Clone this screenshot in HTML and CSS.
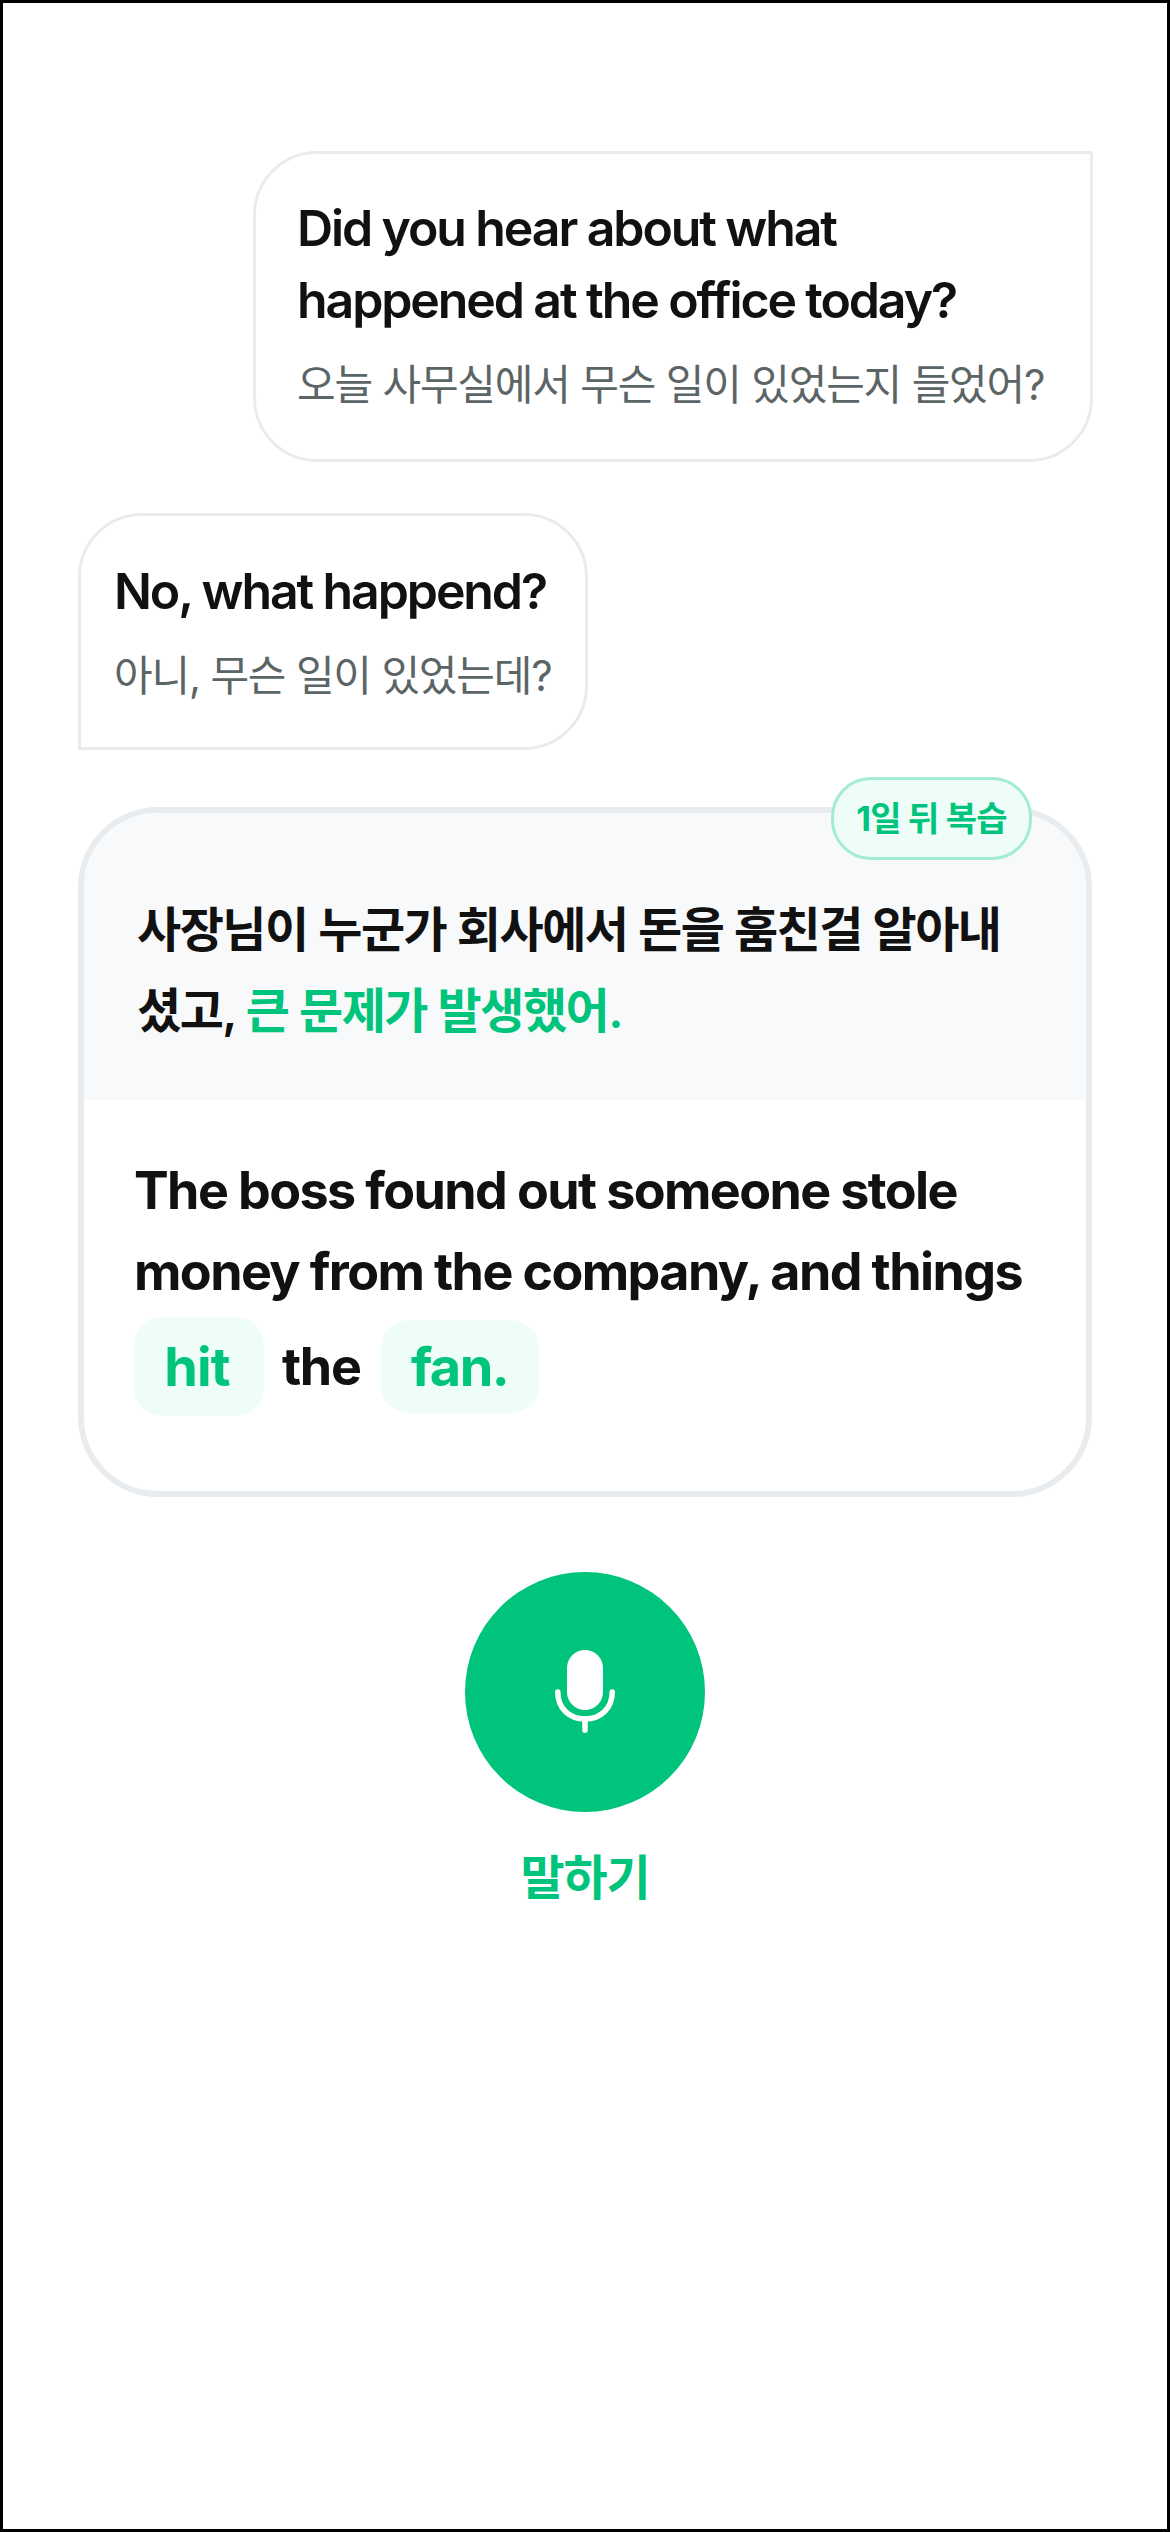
FILE: index.html
```html
<!DOCTYPE html>
<html lang="ko">
<head>
<meta charset="utf-8">
<title>말하기</title>
<link rel="stylesheet" href="styles.css">
</head>
<body>
<main class="page">
  <section class="bubble bubble-me">
    <p class="en">Did you hear about what<br>happened at the office today?</p>
    <p class="ko">오늘 사무실에서 무슨 일이 있었는지 들었어?</p>
  </section>
  <section class="bubble bubble-other">
    <p class="en">No, what happend?</p>
    <p class="ko">아니, 무슨 일이 있었는데?</p>
  </section>
  <section class="card">
    <span class="badge">1일 뒤 복습</span>
    <div class="card-top">
      <p class="card-ko">사장님이 누군가 회사에서 돈을 훔친걸 알아내<br>셨고, <span class="green">큰 문제가 발생했어.</span></p>
    </div>
    <div class="card-bottom">
      <p class="card-en">The boss found out someone stole<br>money from the company, and things</p>
      <div class="chips">
        <span class="chip chip-hit">hit</span>
        <span class="plain">the</span>
        <span class="chip chip-fan">fan.</span>
      </div>
    </div>
  </section>
  <section class="speak">
    <button class="mic" type="button" aria-label="말하기">
      <svg class="mic-icon" viewBox="0 0 64 88" width="64" height="88">
        <rect x="14" y="2" width="36" height="60" rx="18" fill="#fff"/>
        <path d="M4.75 44 C4.75 60 16 71 32 71 C48 71 59.25 60 59.25 44" fill="none" stroke="#fff" stroke-width="5.5" stroke-linecap="round"/>
        <path d="M32 71 V82.25" fill="none" stroke="#fff" stroke-width="5.5" stroke-linecap="round"/>
      </svg>
    </button>
    <span class="speak-label">말하기</span>
  </section>
</main>
</body>
</html>
```

FILE: styles.css
```css
* {
  box-sizing: border-box;
}

html,
body {
  margin: 0;
  padding: 0;
  background: #fff;
}

p {
  margin: 0;
}

.page {
  width: 1170px;
  height: 2532px;
  border: 3px solid #000;
  padding: 148px 75px 0;
  display: flex;
  flex-direction: column;
  font-family: Inter, "Noto Sans CJK KR", sans-serif;
  color: #111;
}

.bubble {
  border: 3px solid #e8ecef;
  background: #fff;
}

.bubble-me {
  align-self: flex-end;
  width: 840px;
  height: 311px;
  margin-right: -1px;
  padding: 38px 0 0 41px;
  border-radius: 64px 0 64px 64px;
}

.bubble-other {
  align-self: flex-start;
  width: 510px;
  height: 237px;
  margin-top: 51px;
  padding: 39px 0 0 33px;
  border-radius: 64px 64px 64px 0;
}

.en {
  font-size: 50px;
  font-weight: 600;
  line-height: 72px;
  letter-spacing: -2.1px;
  white-space: nowrap;
}

.ko {
  margin-top: 17px;
  font-size: 42px;
  font-weight: 400;
  line-height: 64px;
  letter-spacing: -1.2px;
  color: #5c6566;
  white-space: nowrap;
}

.card {
  position: relative;
  width: 1014px;
  height: 690px;
  margin-top: 57px;
  border: 6px solid #e8ecef;
  border-radius: 80px;
  overflow: visible;
  display: flex;
  flex-direction: column;
}

.badge {
  position: absolute;
  top: -36px;
  right: 54px;
  width: 201px;
  height: 83px;
  padding-bottom: 4px;
  border: 3px solid #a4ecd0;
  border-radius: 40px;
  background: #eefdf8;
  color: #00c47c;
  font-size: 34px;
  font-weight: 700;
  letter-spacing: -0.8px;
  display: flex;
  align-items: center;
  justify-content: center;
  white-space: nowrap;
}

.card-top {
  height: 287px;
  padding: 76px 0 0 53px;
  background: #f8f9fb;
  border-radius: 74px 74px 0 0;
}

.card-ko {
  font-size: 48px;
  font-weight: 600;
  line-height: 81px;
  letter-spacing: -1.5px;
  white-space: nowrap;
}

.green {
  color: #00c47c;
}

.card-bottom {
  padding: 50px 0 0 50px;
}

.card-en {
  font-size: 52px;
  font-weight: 700;
  line-height: 81px;
  letter-spacing: -1.6px;
  white-space: nowrap;
}

.chips {
  display: flex;
  align-items: center;
  height: 99px;
  margin-top: 5px;
  font-size: 52px;
  font-weight: 700;
  letter-spacing: -1.3px;
}

.chip {
  display: flex;
  align-items: center;
  justify-content: center;
  background: #eefdf8;
  color: #00c47c;
  border-radius: 28px;
  font-size: 54px;
  letter-spacing: -1.5px;
}

.chip-hit {
  width: 130px;
  height: 99px;
  padding-right: 4px;
  letter-spacing: -0.8px;
}

.chip-fan {
  width: 158px;
  height: 93px;
}

.plain {
  margin: 0 20px 0 18px;
}

.speak {
  align-self: center;
  margin-top: 75px;
  display: flex;
  flex-direction: column;
  align-items: center;
}

.mic {
  width: 240px;
  height: 240px;
  border: 0;
  border-radius: 50%;
  background: #00c47c;
  padding: 0;
  display: flex;
  align-items: center;
  justify-content: center;
}

.mic-icon {
  display: block;
}

.speak-label {
  margin-top: 30px;
  font-size: 48px;
  font-weight: 700;
  line-height: 72px;
  letter-spacing: -1.2px;
  color: #00c47c;
}
```
